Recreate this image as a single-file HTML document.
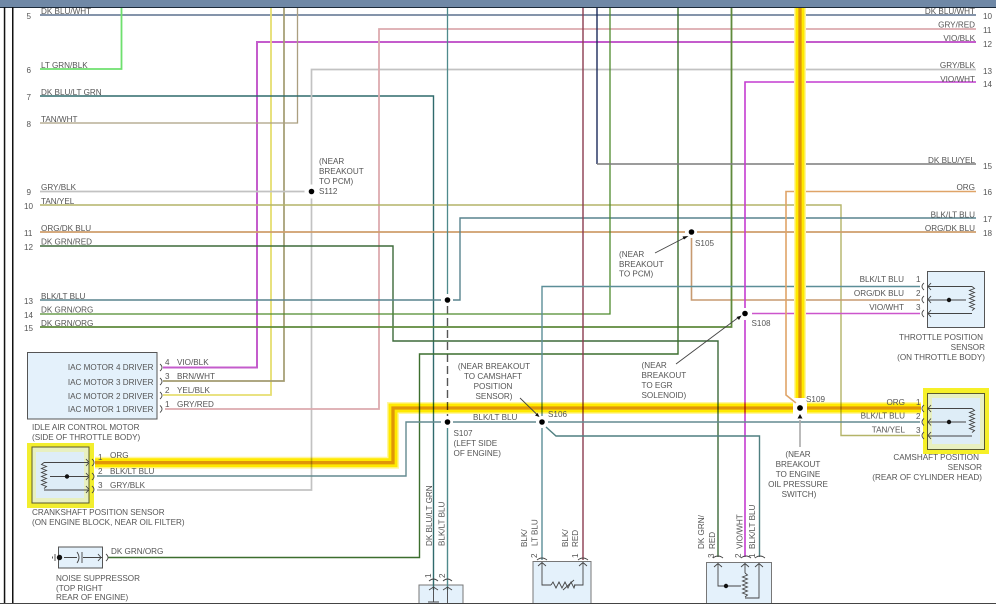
<!DOCTYPE html>
<html><head><meta charset="utf-8">
<style>
html,body{margin:0;padding:0;background:#fff;width:996px;height:604px;overflow:hidden}
svg{display:block;filter:blur(.25px)}
text{font-family:"Liberation Sans",sans-serif;font-size:8.15px;fill:#555}
.e{text-anchor:end}.m{text-anchor:middle}
path,line{fill:none}
</style></head><body>
<svg width="996" height="604" viewBox="0 0 996 604" xmlns="http://www.w3.org/2000/svg">
<rect width="996" height="604" fill="#fff"/>
<!-- boxes below wires -->
<rect x="27.5" y="352.5" width="129.5" height="66.5" fill="#e4f1fb" stroke="#555" stroke-width="1"/>
<rect x="27" y="443" width="67" height="65" fill="#f2ee2e"/>
<rect x="32" y="447" width="57" height="56" fill="#e8f0c0" stroke="#5a5a30" stroke-width="1"/>
<rect x="36" y="452" width="48" height="46" fill="#deedf7"/>
<rect x="58.5" y="547" width="44" height="21" fill="#e4f1fb" stroke="#555" stroke-width="1"/>
<rect x="419" y="585" width="44" height="22" fill="#e4f1fb" stroke="#777" stroke-width="1"/>
<rect x="533" y="561.5" width="58" height="46" fill="#e4f1fb" stroke="#777" stroke-width="1"/>
<rect x="706.5" y="562.5" width="65" height="46" fill="#e4f1fb" stroke="#777" stroke-width="1"/>
<rect x="927.5" y="271.5" width="57" height="56" fill="#e4f1fb" stroke="#555" stroke-width="1"/>
<rect x="923" y="388" width="66" height="66" fill="#f6f028"/>
<rect x="927.5" y="393.5" width="57" height="56" fill="#e8f0c0" stroke="#5a5a30" stroke-width="1"/>
<rect x="932" y="398" width="48" height="46" fill="#deedf7"/>

<!-- wires -->
<path d="M40 15H976" stroke="#3a5578" stroke-width="1.3"/>
<path d="M121.5 8V69H40" stroke="#6ee06e" stroke-width="1.8"/>
<path d="M976 42H257V367.500H163" stroke="#c45ccc" stroke-width="2"/>
<path d="M271 8V395H163" stroke="#e6de70" stroke-width="1.8"/>
<path d="M284 8V381H163" stroke="#a39b70" stroke-width="1.7"/>
<path d="M297.500 8V123H40" stroke="#ab9f80" stroke-width="1.3"/>
<path d="M40 96H433.500V590" stroke="#2f6a6c" stroke-width="1.4"/>
<path d="M40 191.500H305M311.500 197V490H97M311.500 185V69.500H976" stroke="#c2c2c2" stroke-width="1.7"/>
<path d="M976 29H379V409H165" stroke="#dcaaae" stroke-width="1.8"/>
<path d="M40 205H841V435.500H920" stroke="#b4b468" stroke-width="1.4"/>
<path d="M40 232H685M697 232H976" stroke="#cf9e6c" stroke-width="1.7"/>
<path d="M691.500 238V300H920" stroke="#c79a70" stroke-width="1.6"/>
<path d="M40 246H393V341H718V557" stroke="#3d6a3a" stroke-width="1.4"/>
<path d="M40 300H441M453 300H460V218H976" stroke="#58848e" stroke-width="1.4"/>
<path d="M447.500 8V294" stroke="#4f8a8c" stroke-width="1.3"/>
<path d="M447.500 306V416" stroke="#555" stroke-width="1.4" stroke-dasharray="8 4"/>
<path d="M447.500 428V590" stroke="#4f8a8c" stroke-width="1.4"/>
<path d="M40 314H610V8" stroke="#4d8a2c" stroke-width="1.3"/>
<path d="M40 327H731.500V8" stroke="#5f8a3c" stroke-width="1.8"/>
<path d="M678 8V354H419.500V557.500H108" stroke="#3c6e2e" stroke-width="1.4"/>
<path d="M583 8V560" stroke="#8c3c50" stroke-width="1.4"/>
<path d="M597 8V164" stroke="#1c2c5c" stroke-width="1.4"/>
<path d="M597 164H976" stroke="#7c7c7c" stroke-width="1.6"/>
<path d="M542 416V286.500H920" stroke="#5c8e98" stroke-width="1.4"/>
<path d="M542 428V560" stroke="#5c8e98" stroke-width="1.4"/>
<path d="M976 82H745V308M745 320V557" stroke="#c43cd0" stroke-width="1.6"/>
<path d="M752 313.500H920" stroke="#cc55cc" stroke-width="1.6"/>
<path d="M97 476H406V422H441M453 422H536M548 422H920" stroke="#638a90" stroke-width="1.4"/>
<path d="M546 427L556 436H759.500V557" stroke="#4f7f80" stroke-width="1.4"/>
<path d="M976 191.500H786V395L796 403" stroke="#dfa468" stroke-width="1.6"/>

<!-- highlighted wire: horizontal run lets crossing wires show through, vertical run covers them -->
<g style="mix-blend-mode:multiply">
<path d="M95 462.700H393V408H793M807 408H921" stroke="#fff6a0" stroke-width="12"/>
<path d="M95 462.700H393V408H793M807 408H921" stroke="#ffe900" stroke-width="9"/>
<path d="M95 462.700H393V408H793M807 408H921" stroke="#e09608" stroke-width="3.300"/>
</g>
<path d="M800 8V398" stroke="#fff6a0" stroke-width="12"/>
<path d="M800 8V398" stroke="#ffe900" stroke-width="9"/>
<path d="M800 8V398" stroke="#e09608" stroke-width="3.300"/>

<!-- dots -->
<circle cx="311.500" cy="191.500" r="7" fill="#fff"/><circle cx="311.500" cy="191.500" r="2.800" fill="#000"/>
<circle cx="447.500" cy="300" r="2.800" fill="#000"/>
<circle cx="447.500" cy="422" r="2.800" fill="#000"/>
<circle cx="542" cy="422" r="2.800" fill="#000"/>
<circle cx="691.500" cy="232" r="2.800" fill="#000"/>
<circle cx="745" cy="313.500" r="2.800" fill="#000"/>
<circle cx="800" cy="408" r="6.500" fill="#fff"/><circle cx="800" cy="408" r="2.900" fill="#000"/>

<!-- pointers -->
<path d="M520 398L537 414.500M655 253L685 237.500M676 364L739 317" stroke="#444" stroke-width=".9"/>
<path d="M800 447V420" stroke="#aaa" stroke-width="1.6"/>
<path d="M539.500 417l-4.500-1.500 2.500-2.500zM688.500 236l-4.500 3.500-1.500-3zM741.500 315.500l-2.500 4.500-2.500-3zM800 414l2.500 4.500h-5z" style="fill:#111" stroke="none"/>

<!-- left rails & top bar -->
<rect x="0" y="0" width="996" height="7" fill="#6f88a6"/>
<rect x="0" y="7" width="996" height="1" fill="#1c2a3a"/>
<rect x="3.800" y="7" width="1.500" height="597" fill="#111"/>
<rect x="12" y="7" width="1.500" height="597" fill="#111"/>
<rect x="0" y="603" width="996" height="1" fill="#444"/>

<!-- connector glyphs: IAC -->
<g stroke="#444" stroke-width=".9">
<path d="M160 364q4 3.500 0 7M160 378q4 3.500 0 7M160 392q4 3.500 0 7M160 405.500q4 3.500 0 7"/>
<!-- crank -->
<path d="M92 459q4 3.500 0 7M92 473q4 3.500 0 7M92 486q4 3.500 0 7"/>
<path d="M86 459l3 3.500-3 3.500M86 473l3 3.500-3 3.500M86 486l3 3.500-3 3.500"/>
<path d="M44 462.500H88M44 490H88M50 476.500H88"/>
<path d="M44 462.500l-2.500 2 5 2-5 2 5 2-5 2 5 2-5 2 5 2-5 2 5 2-5 2 5 2-2.500 2"/>
<!-- noise -->
<path d="M55 554v7M52.500 556.500v2M64 557.500H77M83 557.500H102"/>
<path d="M77 552q4 5.500 0 11M82 552v11"/>
<path d="M98 554l3 3.500-3 3.500M106 554q4 3.500 0 7"/>
<!-- throttle -->
<path d="M924 283q-4 3.500 0 7M924 296q-4 3.500 0 7M924 310q-4 3.500 0 7"/>
<path d="M931 283l-3 3.500 3 3.500M931 296l-3 3.500 3 3.500M931 310l-3 3.500 3 3.500"/>
<path d="M928 286.500H972M928 313.500H972M928 300H966"/>
<path d="M972 286.500l2.500 2-5 2 5 2-5 2 5 2-5 2 5 2-5 2 5 2-5 2 5 2-2.500 2"/>
<!-- cam -->
<path d="M924 405q-4 3.500 0 7M924 418.500q-4 3.500 0 7M924 432q-4 3.500 0 7"/>
<path d="M931 405l-3 3.500 3 3.500M931 418.500l-3 3.500 3 3.500M931 432l-3 3.500 3 3.500"/>
<path d="M928 408.500H972M928 436H972M928 422H966"/>
<path d="M972 408.500l2.500 2-5 2 5 2-5 2 5 2-5 2 5 2-5 2 5 2-5 2 5 2-2.500 2"/>
<!-- bottom connectors -->
<path d="M429 581q4.500-4 9 0M443 581q4.500-4 9 0M537 560q5-4 10 0M578 560q5-4 10 0M713 558q5-4 10 0M741 558q5-4 10 0M755 558q5-4 10 0"/>
<path d="M429 590l4.500-3 4.500 3M443 590l4.500-3 4.500 3M433.500 587V602M428 602H439M447.500 587V604"/>
<path d="M538 566l4-3.500 4 3.500M579 566l4-3.500 4 3.500M542 563V585H551M583 563V585H574"/>
<path d="M551 585l2-3 3 6 3-6 3 6 3-6 3 6 3-6 3 6 1-3"/>
<path d="M563 590L574 580"/>
<path d="M714 567l4-3.500 4 3.500M741 567l4-3.500 4 3.500M755 567l4-3.500 4 3.500"/>
<path d="M718 564V586H741M745 564V573M759 564V598H745"/>
<path d="M745 573l2.500 2-5 2 5 2-5 2 5 2-5 2 5 2-5 2 5 2-5 2 5 2-2.500 2"/>
</g>
<g style="fill:#111" stroke="none">
<circle cx="67" cy="476.500" r="2.200"/><path d="M47 476.500l4-2.500v5z"/>
<circle cx="59.500" cy="557.500" r="2.700"/>
<circle cx="949" cy="300" r="2.200"/><path d="M970 300l-4-2.500v5z"/>
<circle cx="949" cy="422" r="2.200"/><path d="M970 422l-4-2.500v5z"/>
<circle cx="726" cy="586" r="2.200"/><path d="M743 586l-4-2.500v5z"/>
</g>

<!-- left labels -->
<text x="26.500" y="19">5</text><text x="26.500" y="73">6</text><text x="26.500" y="100">7</text><text x="26.500" y="127">8</text><text x="26.500" y="195">9</text>
<text x="24" y="209">10</text><text x="24" y="236">11</text><text x="24" y="250">12</text><text x="24" y="304">13</text><text x="24" y="318">14</text><text x="24" y="331">15</text>
<text x="41" y="14">DK BLU/WHT</text>
<text x="41" y="68">LT GRN/BLK</text>
<text x="41" y="95">DK BLU/LT GRN</text>
<text x="41" y="122">TAN/WHT</text>
<text x="41" y="190">GRY/BLK</text>
<text x="41" y="204">TAN/YEL</text>
<text x="41" y="231">ORG/DK BLU</text>
<text x="41" y="244.500">DK GRN/RED</text>
<text x="41" y="299">BLK/LT BLU</text>
<text x="41" y="312.500">DK GRN/ORG</text>
<text x="41" y="326">DK GRN/ORG</text>

<!-- right labels -->
<text class="e" x="975" y="14">DK BLU/WHT</text>
<text class="e" x="975" y="27.500">GRY/RED</text>
<text class="e" x="975" y="41">VIO/BLK</text>
<text class="e" x="975" y="68">GRY/BLK</text>
<text class="e" x="975" y="82">VIO/WHT</text>
<text class="e" x="975" y="163">DK BLU/YEL</text>
<text class="e" x="975" y="190">ORG</text>
<text class="e" x="975" y="217.500">BLK/LT BLU</text>
<text class="e" x="975" y="231">ORG/DK BLU</text>
<text x="983" y="19">10</text><text x="983" y="33">11</text><text x="983" y="47">12</text><text x="983" y="74">13</text><text x="983" y="87">14</text><text x="983" y="169">15</text><text x="983" y="195">16</text><text x="983" y="222">17</text><text x="983" y="236">18</text>

<!-- IAC -->
<text class="e" x="153.500" y="370">IAC MOTOR 4 DRIVER</text>
<text class="e" x="153.500" y="385">IAC MOTOR 3 DRIVER</text>
<text class="e" x="153.500" y="399">IAC MOTOR 2 DRIVER</text>
<text class="e" x="153.500" y="412">IAC MOTOR 1 DRIVER</text>
<text x="165" y="365">4</text><text x="177" y="365">VIO/BLK</text>
<text x="165" y="379">3</text><text x="177" y="379">BRN/WHT</text>
<text x="165" y="393">2</text><text x="177" y="393">YEL/BLK</text>
<text x="165" y="407">1</text><text x="177" y="407">GRY/RED</text>
<text x="32" y="430">IDLE AIR CONTROL MOTOR</text>
<text x="32" y="440">(SIDE OF THROTTLE BODY)</text>

<!-- crank -->
<text x="98" y="460">1</text><text x="110" y="458">ORG</text>
<text x="98" y="474">2</text><text x="110" y="474">BLK/LT BLU</text>
<text x="98" y="488">3</text><text x="110" y="488">GRY/BLK</text>
<text x="32" y="515">CRANKSHAFT POSITION SENSOR</text>
<text x="32" y="525">(ON ENGINE BLOCK, NEAR OIL FILTER)</text>

<!-- noise -->
<text x="111" y="554">DK GRN/ORG</text>
<text x="56" y="581">NOISE SUPPRESSOR</text>
<text x="56" y="591">(TOP RIGHT</text>
<text x="56" y="600">REAR OF ENGINE)</text>

<!-- S112 -->
<text x="319" y="164">(NEAR</text><text x="319" y="174">BREAKOUT</text><text x="319" y="184">TO PCM)</text><text x="319" y="194">S112</text>

<!-- centre -->
<text class="m" x="494" y="369">(NEAR BREAKOUT</text>
<text class="m" x="493" y="379">TO CAMSHAFT</text>
<text class="m" x="493" y="389">POSITION</text>
<text class="m" x="494" y="399">SENSOR)</text>
<text x="548" y="417">S106</text>
<text x="473" y="420">BLK/LT BLU</text>
<text x="453.500" y="436">S107</text><text x="453.500" y="446">(LEFT SIDE</text><text x="453.500" y="456">OF ENGINE)</text>
<text x="619" y="257">(NEAR</text><text x="619" y="267">BREAKOUT</text><text x="619" y="276.500">TO PCM)</text>
<text x="695" y="246">S105</text>
<text x="751.500" y="326">S108</text>
<text x="641.500" y="368">(NEAR</text><text x="641.500" y="378">BREAKOUT</text><text x="641.500" y="388">TO EGR</text><text x="641.500" y="398">SOLENOID)</text>
<text x="806" y="402">S109</text>
<text class="m" x="798" y="457">(NEAR</text><text class="m" x="798" y="467">BREAKOUT</text><text class="m" x="798" y="477">TO ENGINE</text><text class="m" x="798" y="487">OIL PRESSURE</text><text class="m" x="799" y="497">SWITCH)</text>

<!-- throttle -->
<text class="e" x="904" y="282">BLK/LT BLU</text><text x="916" y="282">1</text>
<text class="e" x="904" y="296">ORG/DK BLU</text><text x="916" y="296">2</text>
<text class="e" x="904" y="310">VIO/WHT</text><text x="916" y="310">3</text>
<text class="e" x="983" y="340">THROTTLE POSITION</text>
<text class="e" x="985" y="350">SENSOR</text>
<text class="e" x="985" y="360">(ON THROTTLE BODY)</text>

<!-- cam -->
<text class="e" x="905" y="405">ORG</text><text x="916" y="405">1</text>
<text class="e" x="905" y="418.500">BLK/LT BLU</text><text x="916" y="419">2</text>
<text class="e" x="905" y="432.500">TAN/YEL</text><text x="916" y="433">3</text>
<text class="e" x="979" y="460">CAMSHAFT POSITION</text>
<text class="e" x="982" y="470">SENSOR</text>
<text class="e" x="982" y="480">(REAR OF CYLINDER HEAD)</text>

<!-- vertical labels -->
<text transform="translate(432 546) rotate(-90)">DK BLU/LT GRN</text>
<text transform="translate(444.500 546) rotate(-90)">BLK/LT BLU</text>
<text transform="translate(527 547) rotate(-90)">BLK/</text>
<text transform="translate(537.500 546) rotate(-90)">LT BLU</text>
<text transform="translate(568 547) rotate(-90)">BLK/</text>
<text transform="translate(578 547) rotate(-90)">RED</text>
<text transform="translate(704 549) rotate(-90)">DK GRN/</text>
<text transform="translate(715 549) rotate(-90)">RED</text>
<text transform="translate(742.500 549) rotate(-90)">VIO/WHT</text>
<text transform="translate(755 549) rotate(-90)">BLK/LT BLU</text>
<text transform="translate(431 578) rotate(-90)">1</text>
<text transform="translate(445 578) rotate(-90)">2</text>
<text transform="translate(537 558) rotate(-90)">2</text>
<text transform="translate(578 558) rotate(-90)">1</text>
<text transform="translate(714 558) rotate(-90)">3</text>
<text transform="translate(741 558) rotate(-90)">2</text>
<text transform="translate(755 558) rotate(-90)">1</text>
</svg>
</body></html>
